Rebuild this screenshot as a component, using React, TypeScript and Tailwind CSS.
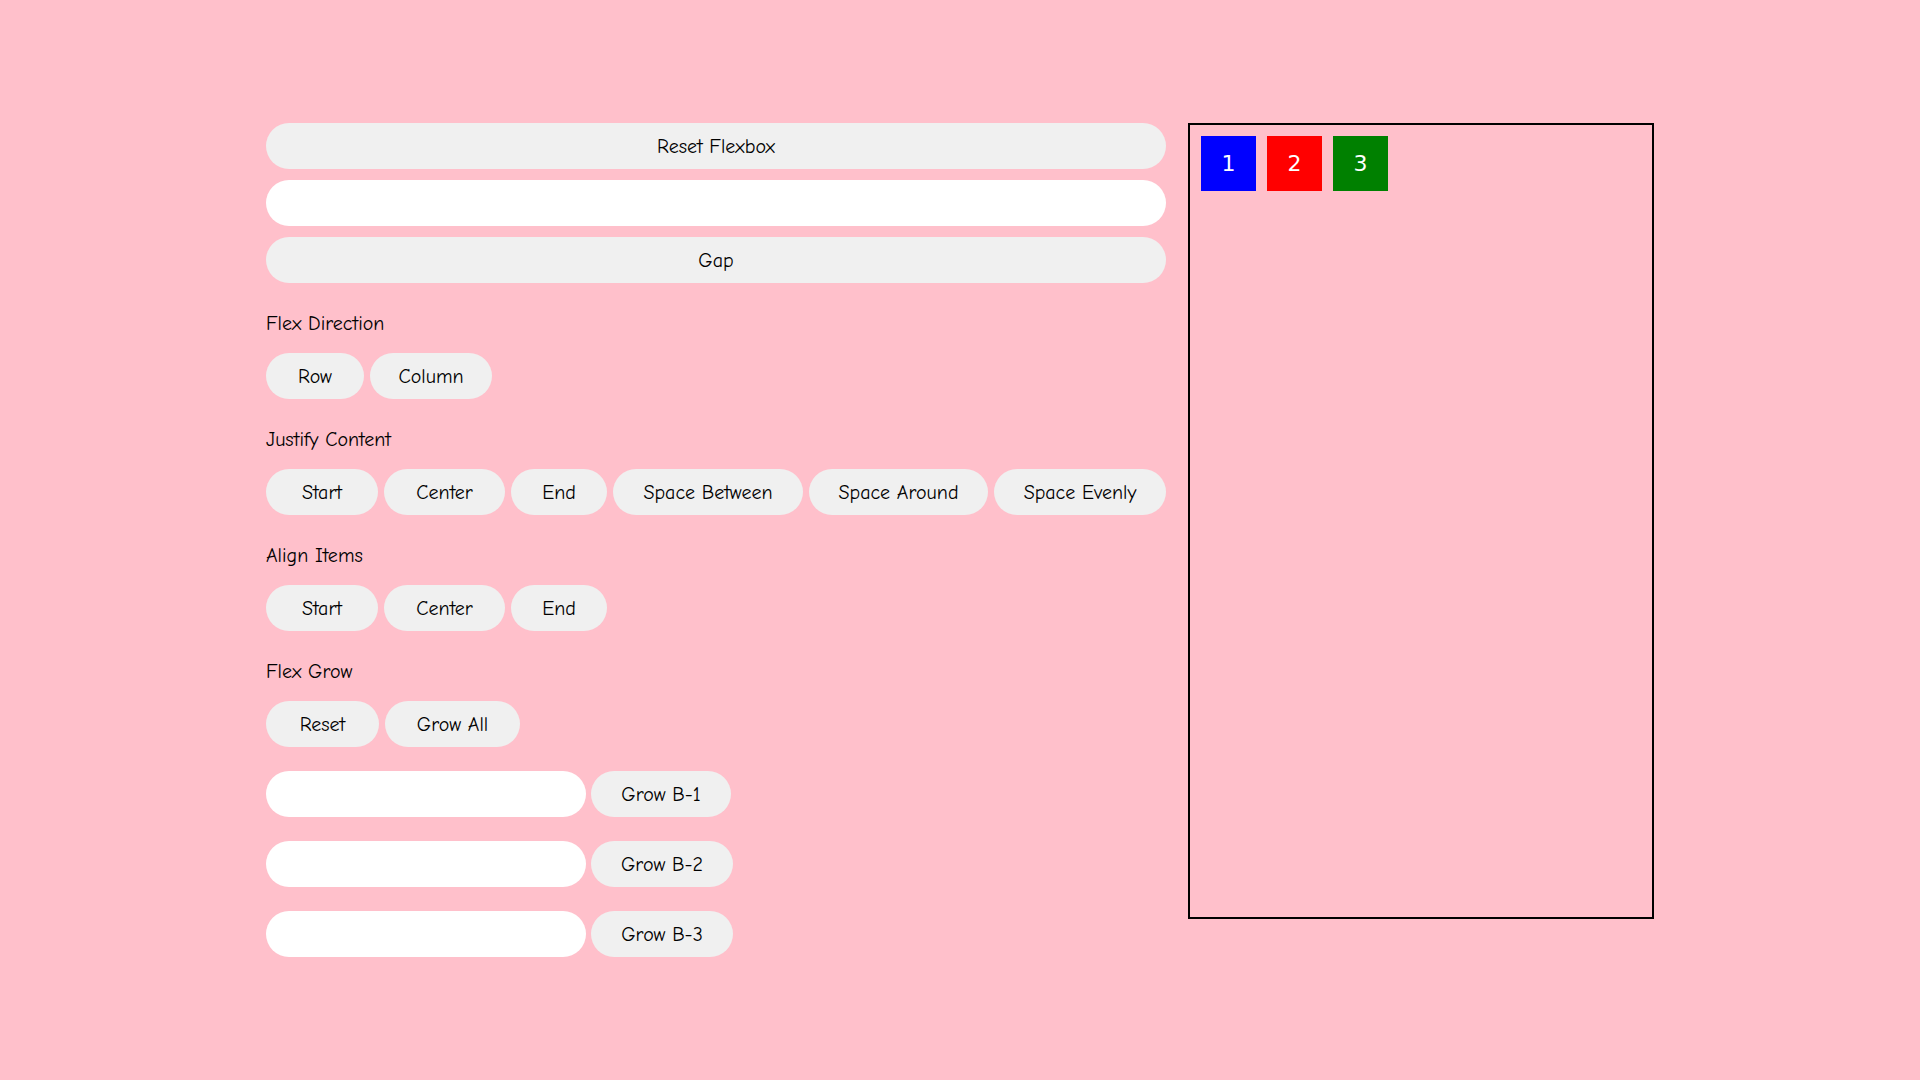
import React from "react";

const font = { fontFamily: '"Comic Sans MS", "Comic Neue", Lato, "DejaVu Sans", sans-serif' };

function Btn({ w, children }: { w: string; children: React.ReactNode }) {
  return (
    <button className={`${w} h-[46px] shrink-0 rounded-full bg-[#f0f0f0] pt-[2px] text-[20px] font-medium text-black flex items-center justify-center`}>
      {children}
    </button>
  );
}

function Label({ children }: { children: React.ReactNode }) {
  return <div className="mt-[29px] mb-[17px] h-[24px] leading-[24px] text-[20px] font-medium text-black">{children}</div>;
}

export default function App() {
  return (
    <div className="min-h-screen w-full bg-[#ffc0cb]" style={font}>
      <div className="flex justify-center gap-[22px] pt-[123px]">
        <div className="w-[900px] flex flex-col">
          <button className="h-[46px] w-full rounded-full bg-[#f0f0f0] pt-[2px] text-[20px] font-medium text-black">Reset Flexbox</button>
          <input className="mt-[11px] h-[46px] w-full rounded-full bg-white outline-none px-5" />
          <button className="mt-[11px] h-[46px] w-full rounded-full bg-[#f0f0f0] pt-[2px] text-[20px] font-medium text-black">Gap</button>

          <Label>Flex Direction</Label>
          <div className="flex gap-[6px]">
            <Btn w="w-[98px]">Row</Btn>
            <Btn w="w-[122px]">Column</Btn>
          </div>

          <Label>Justify Content</Label>
          <div className="flex gap-[6px]">
            <Btn w="w-[112px]">Start</Btn>
            <Btn w="w-[121px]">Center</Btn>
            <Btn w="w-[96px]">End</Btn>
            <Btn w="w-[190px]">Space Between</Btn>
            <Btn w="w-[179px]">Space Around</Btn>
            <Btn w="w-[172px]">Space Evenly</Btn>
          </div>

          <Label>Align Items</Label>
          <div className="flex gap-[6px]">
            <Btn w="w-[112px]">Start</Btn>
            <Btn w="w-[121px]">Center</Btn>
            <Btn w="w-[96px]">End</Btn>
          </div>

          <Label>Flex Grow</Label>
          <div className="flex gap-[6px]">
            <Btn w="w-[113px]">Reset</Btn>
            <Btn w="w-[135px]">Grow All</Btn>
          </div>

          <div className="mt-[24px] flex flex-col gap-[24px]">
            {["Grow B-1", "Grow B-2", "Grow B-3"].map((t, i) => (
              <div key={t} className="flex gap-[5px]">
                <input className="h-[46px] w-[320px] rounded-full bg-white outline-none px-5" />
                <Btn w={i === 0 ? "w-[140px]" : "w-[142px]"}>{t}</Btn>
              </div>
            ))}
          </div>
        </div>

        <div className="w-[466px] h-[796px] border-2 border-black p-[11px] flex items-start gap-[11px]">
          <div className="w-[55px] h-[55px] bg-[#0000ff] text-white flex items-center justify-center text-[22px]" style={{ fontFamily: '"DejaVu Sans", sans-serif' }}>1</div>
          <div className="w-[55px] h-[55px] bg-[#ff0000] text-white flex items-center justify-center text-[22px]" style={{ fontFamily: '"DejaVu Sans", sans-serif' }}>2</div>
          <div className="w-[55px] h-[55px] bg-[#008000] text-white flex items-center justify-center text-[22px]" style={{ fontFamily: '"DejaVu Sans", sans-serif' }}>3</div>
        </div>
      </div>
    </div>
  );
}
